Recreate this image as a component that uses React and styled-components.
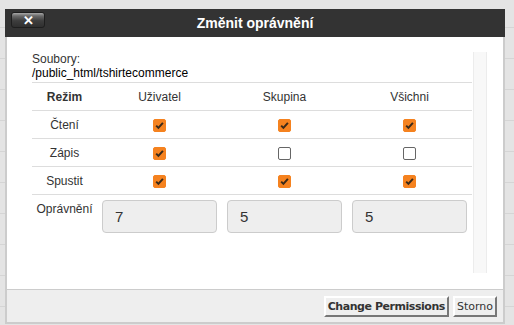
import React from "react";
import styled, { createGlobalStyle } from "styled-components";

const Global = createGlobalStyle`
  html, body { margin: 0; padding: 0; }
  body {
    width: 514px;
    height: 325px;
    overflow: hidden;
    background-color: #e4e4e4;
    background-image: repeating-linear-gradient(to bottom, transparent 0, transparent 30px, #d5d5d5 30px, #d5d5d5 31px);
    background-position: 0 -3px;
    font-family: "Liberation Sans", Arial, sans-serif;
  }
`;

const Dialog = styled.div`
  margin: 9px 0 0 5px;
  width: 500px;
  height: 315px;
  display: flex;
  flex-direction: column;
  box-sizing: border-box;
`;

const TitleBar = styled.div`
  height: 28px;
  flex: none;
  background: #333333;
  display: grid;
  grid-template-columns: 1fr auto 1fr;
  align-items: start;
`;

const CloseButton = styled.button`
  justify-self: start;
  margin: 3px 0 0 6px;
  width: 34px;
  height: 16px;
  padding: 0;
  box-sizing: border-box;
  border: 1px solid #1e1e1e;
  border-radius: 3px;
  background: linear-gradient(to bottom, #a8a8a8 0, #6a6a6a 3px, #3e3e3e 55%, #2f2f2f 100%);
  color: #fff;
  font: bold 13px/13px "Liberation Sans", Arial, sans-serif;
  display: flex;
  align-items: center;
  justify-content: center;
  cursor: pointer;
`;

const Title = styled.h1`
  margin: 0;
  line-height: 28px;
  font-size: 14px;
  font-weight: bold;
  color: #fff;
  font-family: "Liberation Sans", Arial, sans-serif;
`;

const Body = styled.div`
  flex: 1;
  background: #fff;
  border-left: 2px solid #cccccc;
  border-right: 2px solid #cccccc;
  padding: 15px 16px 0 25px;
`;

const Scroller = styled.div`
  display: flex;
  height: 221px;
`;

const Content = styled.div`
  flex: 1;
  padding-right: 1px;
`;

const Track = styled.div`
  width: 12px;
  flex: none;
  background: #f8f8f8;
  border-left: 1px solid #ececec;
  border-right: 1px solid #ececec;
`;

const FileLabel = styled.div`
  font-size: 12px;
  line-height: 14px;
  color: ${(p) => (p.$strong ? "#000" : "#333")};
`;

const Table = styled.table`
  width: 100%;
  margin-top: 2px;
  border-collapse: collapse;
  table-layout: fixed;
  font-size: 12px;
  color: #333;
`;

const Row = styled.tr`
  border-top: 1px solid #dddddd;
  height: 28px;
`;

const Cell = styled.td`
  padding: 0;
  height: 27px;
  box-sizing: border-box;
  text-align: center;
  vertical-align: ${(p) => (p.$top ? "top" : "middle")};
  font-weight: ${(p) => (p.$bold ? "bold" : "normal")};
  padding-top: ${(p) => (p.$pad ? `${p.$pad}px` : "0")};
`;

const Box = styled.span`
  display: inline-block;
  vertical-align: middle;
  width: 13px;
  height: 13px;
  box-sizing: border-box;
  border-radius: 2px;
  background: ${(p) => (p.$checked ? "#f5821f" : "#fff")};
  border: 1px solid ${(p) => (p.$checked ? "#f5821f" : "#666")};
  position: relative;
  svg { position: absolute; left: -1px; top: -1px; }
`;

const ValueInput = styled.input`
  display: block;
  width: calc(100% - 10px);
  height: 33px;
  margin: 0 auto;
  box-sizing: border-box;
  border: 1px solid #cccccc;
  border-radius: 4px;
  background: #eeeeee;
  padding: 0 12px;
  font-family: "Liberation Sans", Arial, sans-serif;
  font-size: 15px;
  color: #333;
  outline: none;
`;

const Footer = styled.div`
  flex: none;
  height: 32px;
  background: #eeeeee;
  border: 2px solid #cccccc;
  border-top-width: 1px;
  display: flex;
  justify-content: flex-end;
  align-items: center;
  gap: 4px;
  padding-right: 6px;
`;

const Button = styled.button`
  height: 21px;
  box-sizing: border-box;
  padding: 0 2px;
  background: #efefef;
  border: 2px solid;
  border-color: #ffffff #777777 #777777 #ffffff;
  font-family: "DejaVu Sans", Verdana, sans-serif;
  font-size: 11px;
  letter-spacing: ${(p) => (p.$primary ? "-0.45px" : "0")};
  font-weight: ${(p) => (p.$primary ? "bold" : "normal")};
  color: #333;
  cursor: pointer;
`;

const Check = ({ checked }) => (
  <Box $checked={checked}>
    {checked && (
      <svg width="13" height="13" viewBox="0 0 13 13">
        <path d="M3.2 6.6 L5.4 8.9 L9.9 3.9" fill="none" stroke="#3a2a1a" strokeWidth="2" />
      </svg>
    )}
  </Box>
);

const rows = [
  { name: "Čtení", v: [true, true, true] },
  { name: "Zápis", v: [true, false, false] },
  { name: "Spustit", v: [true, true, true] },
];

export default function App() {
  return (
    <>
      <Global />
      <Dialog>
        <TitleBar>
          <CloseButton aria-label="Zavřít">✕</CloseButton>
          <Title>Změnit oprávnění</Title>
          <span />
        </TitleBar>
        <Body>
          <Scroller>
            <Content>
              <FileLabel>Soubory:</FileLabel>
              <FileLabel $strong>/public_html/tshirtecommerce</FileLabel>
              <Table>
                <colgroup>
                  <col style={{ width: 65 }} />
                  <col />
                  <col />
                  <col />
                </colgroup>
                <tbody>
                  <Row>
                    <Cell $bold>Režim</Cell>
                    <Cell>Uživatel</Cell>
                    <Cell>Skupina</Cell>
                    <Cell>Všichni</Cell>
                  </Row>
                  {rows.map((r) => (
                    <Row key={r.name}>
                      <Cell>{r.name}</Cell>
                      {r.v.map((c, i) => (
                        <Cell key={i}>
                          <Check checked={c} />
                        </Cell>
                      ))}
                    </Row>
                  ))}
                  <Row>
                    <Cell $top $pad={7}>Oprávnění</Cell>
                    {["7", "5", "5"].map((v, i) => (
                      <Cell key={i} $top $pad={5}>
                        <ValueInput readOnly value={v} />
                      </Cell>
                    ))}
                  </Row>
                </tbody>
              </Table>
            </Content>
            <Track />
          </Scroller>
        </Body>
        <Footer>
          <Button $primary>Change Permissions</Button>
          <Button>Storno</Button>
        </Footer>
      </Dialog>
    </>
  );
}
